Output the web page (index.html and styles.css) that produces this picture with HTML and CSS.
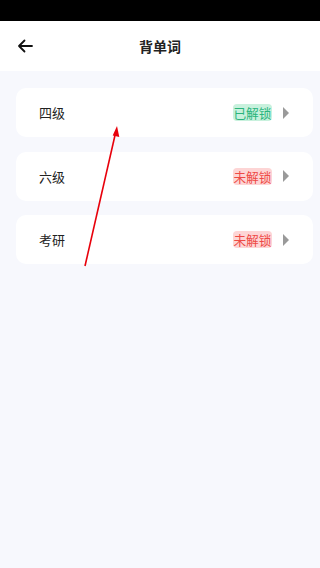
FILE: index.html
```html
<!DOCTYPE html>
<html lang="zh-CN">
<head>
  <meta charset="UTF-8">
  <meta name="viewport" content="width=device-width, initial-scale=1.0">
  <title>背单词</title>
  <link rel="stylesheet" href="styles.css">
</head>
<body>
  <div class="status-bar"></div>
  <div class="header">
    <svg class="back" width="16" height="14" viewBox="0 0 16 14">
      <path d="M15 7H2M7.5 1.5L2 7l5.5 5.5" fill="none" stroke="#111" stroke-width="1.8" stroke-linecap="round" stroke-linejoin="round"/>
    </svg>
    <h1>背单词</h1>
  </div>

  <div class="list">
    <div class="item">
      <span class="name">四级</span>
      <span class="badge unlocked">已解锁</span>
      <span class="arrow"></span>
    </div>
    <div class="item">
      <span class="name">六级</span>
      <span class="badge locked">未解锁</span>
      <span class="arrow"></span>
    </div>
    <div class="item">
      <span class="name">考研</span>
      <span class="badge locked">未解锁</span>
      <span class="arrow"></span>
    </div>
  </div>

  <svg class="pointer" width="320" height="568" viewBox="0 0 320 568">
    <line x1="85" y1="266" x2="115.3" y2="134" stroke="#e8000b" stroke-width="1.6"/>
    <polygon points="117,126 119.3,137 112.7,135.5" fill="#e8000b"/>
  </svg>
</body>
</html>
```

FILE: styles.css
```css
body {
  margin: 0;
  width: 320px;
  height: 568px;
  background-color: #f7f8fd;
  font-family: "Noto Sans CJK SC", "Noto Sans", sans-serif;
  position: relative;
  overflow: hidden;
}

.status-bar {
  height: 21px;
  background-color: #000;
}

.header {
  height: 50px;
  background-color: #fff;
  display: flex;
  align-items: center;
  justify-content: center;
  position: relative;
}

.header h1 {
  margin: 0;
  font-size: 14px;
  font-weight: bold;
  color: #222;
}

.back {
  position: absolute;
  left: 17px;
  top: 18px;
}

.list {
  display: flex;
  flex-direction: column;
  gap: 14.5px;
  padding: 17px 7px 0 16px;
}

.item {
  height: 49px;
  background-color: #fff;
  border-radius: 10px;
  display: flex;
  align-items: center;
  padding: 0 24px 0 23px;
}

.name {
  flex: 1;
  font-size: 13px;
  color: #222;
}

.badge {
  font-size: 12.7px;
  line-height: 17px;
  padding: 0 0.5px;
  border-radius: 4px;
}

.badge.unlocked {
  color: #2ab47c;
  background-color: #c8f1dd;
}

.badge.locked {
  color: #ee4a45;
  background-color: #fdd5d5;
}

.arrow {
  width: 0;
  height: 0;
  margin-left: 11px;
  border-top: 6px solid transparent;
  border-bottom: 6px solid transparent;
  border-left: 6px solid #9a9a9a;
}

.pointer {
  position: absolute;
  left: 0;
  top: 0;
  pointer-events: none;
}
```
